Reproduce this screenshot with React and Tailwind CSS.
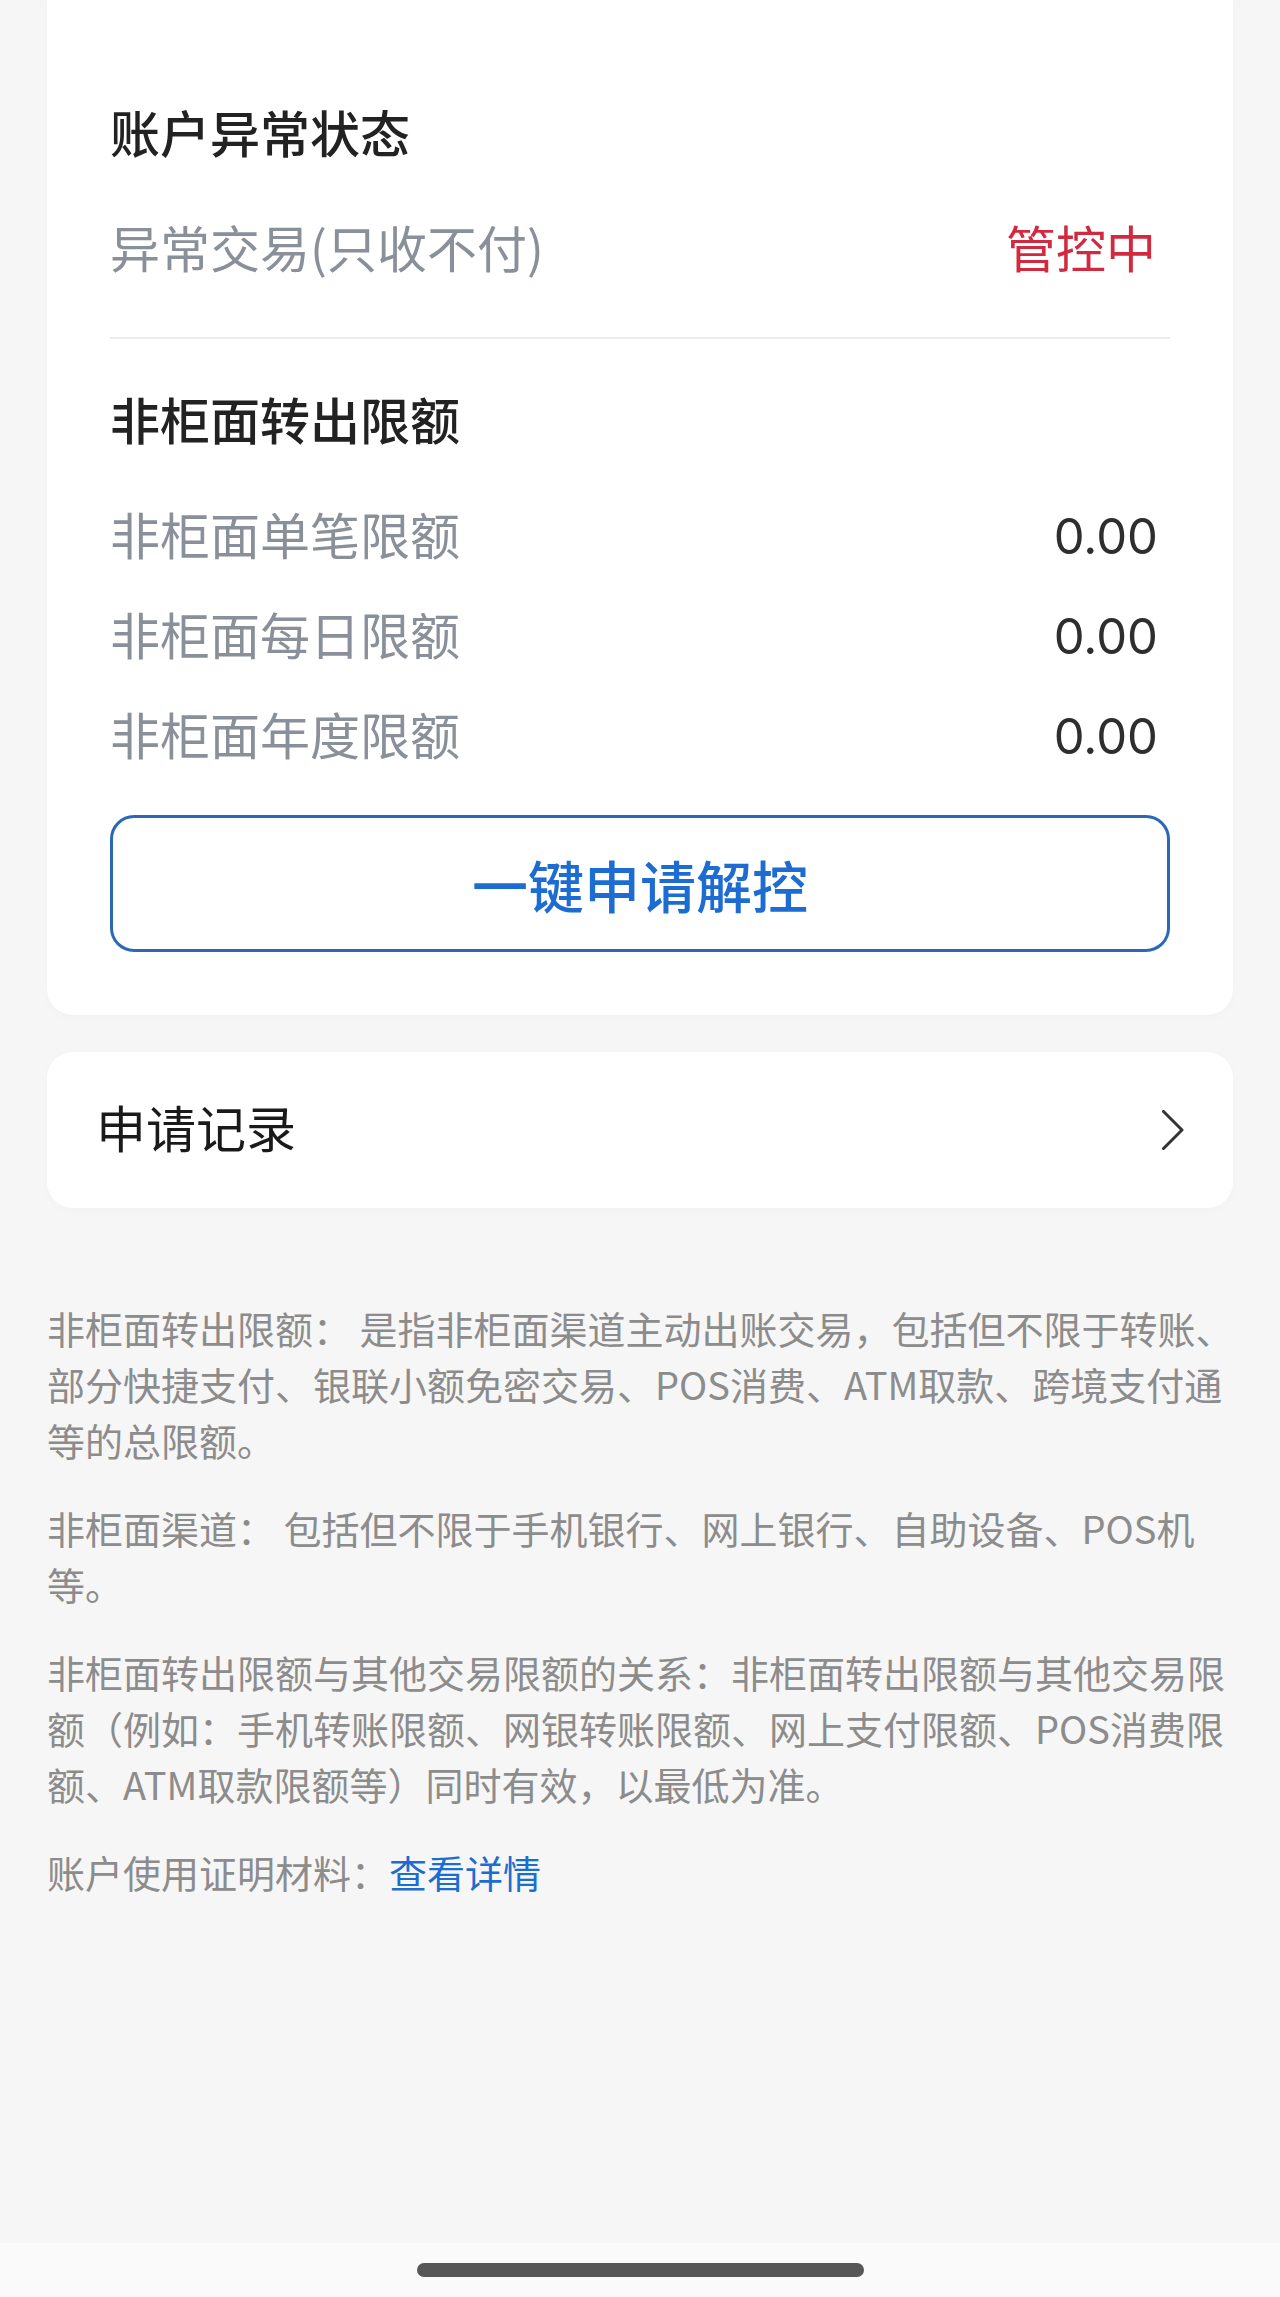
import React from "react";

function Row({ label, value }) {
  return (
    <div className="flex h-[100px] items-center justify-between pr-[12px]">
      <span className="text-[50px] leading-[64px] text-[#8a9099]">{label}</span>
      <span className="pt-[8px] font-['Inter','Noto_Sans_CJK_SC',sans-serif] text-[49px] leading-[64px] text-[#2e2e2e]">
        {value}
      </span>
    </div>
  );
}

export default function App() {
  return (
    <div className="flex min-h-[2297px] w-[1280px] flex-col bg-[#f6f6f6] font-['Noto_Sans_CJK_SC','Noto_Sans',sans-serif]">
      {/* Card 1 */}
      <div className="mx-[47px] rounded-b-[26px] bg-white px-[63px] pb-[63px] pt-[99px] shadow-[0_2px_8px_rgba(0,0,0,0.025)]">
        <div className="flex h-[64px] items-center text-[50px] font-medium leading-[64px] text-[#222]">
          账户异常状态
        </div>
        <div className="mt-[33px] flex h-[100px] items-center justify-between pr-[14px]">
          <span className="text-[50px] leading-[64px] text-[#8a9099]">异常交易(只收不付)</span>
          <span className="text-[50px] leading-[64px] text-[#d12a3e]">管控中</span>
        </div>
        <div className="mt-[41px] h-[2px] bg-[#ececec]" />
        <div className="mt-[47px] flex h-[64px] items-center text-[50px] font-medium leading-[64px] text-[#222]">
          非柜面转出限额
        </div>
        <div className="mt-[33px]">
          <Row label="非柜面单笔限额" value="0.00" />
          <Row label="非柜面每日限额" value="0.00" />
          <Row label="非柜面年度限额" value="0.00" />
        </div>
        <button className="mt-[32px] flex h-[137px] w-full items-center justify-center rounded-[24px] border-[3px] border-[#2b68b6] bg-white text-[56px] font-medium text-[#1d6cd2]">
          一键申请解控
        </button>
      </div>

      {/* Card 2 */}
      <div className="mx-[47px] mt-[37px] flex h-[156px] items-center justify-between rounded-[26px] bg-white px-[49px] shadow-[0_2px_8px_rgba(0,0,0,0.025)]">
        <span className="pb-[8px] text-[50px] leading-[64px] text-[#1a1a1a]">申请记录</span>
        <svg width="22" height="40" viewBox="0 0 22 40" fill="none">
          <path d="M1.5 1.5 L20 20 L1.5 38.5" stroke="#333" strokeWidth="3" strokeLinecap="round" strokeLinejoin="round" />
        </svg>
      </div>

      {/* Notes */}
      <div className="pl-[47px] pr-[40px] pt-[92px] text-[38px] leading-[56px] text-[#8c8c8c]">
        <p>非柜面转出限额： 是指非柜面渠道主动出账交易，包括但不限于转账、部分快捷支付、银联小额免密交易、POS消费、ATM取款、跨境支付通等的总限额。</p>
        <p className="mt-[32px]">非柜面渠道： 包括但不限于手机银行、网上银行、自助设备、POS机等。</p>
        <p className="mt-[32px]">非柜面转出限额与其他交易限额的关系：非柜面转出限额与其他交易限额（例如：手机转账限额、网银转账限额、网上支付限额、POS消费限额、ATM取款限额等）同时有效，以最低为准。</p>
        <p className="mt-[32px]">
          账户使用证明材料：<span className="text-[#1c6dd0]">查看详情</span>
        </p>
      </div>

      <div className="flex-1" />

      {/* Bottom gesture bar */}
      <div className="flex h-[54px] items-start justify-center bg-[#fafafa] pt-[20px]">
        <div className="h-[14px] w-[447px] rounded-full bg-[#575757]" />
      </div>
    </div>
  );
}
